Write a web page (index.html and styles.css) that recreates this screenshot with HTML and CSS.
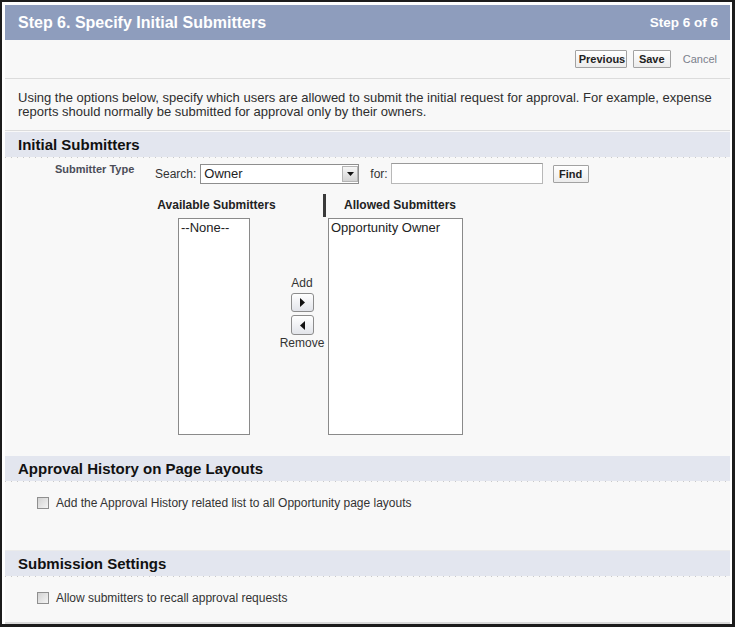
FILE: index.html
```html
<!DOCTYPE html>
<html>
<head>
<meta charset="utf-8">
<link rel="stylesheet" href="styles.css">
</head>
<body>
<div class="frame">
  <div class="panel">
    <div class="pbheader">
      <h1 class="title">Step 6. Specify Initial Submitters</h1>
      <span class="step">Step 6 of 6</span>
    </div>
    <div class="btnbar">
      <button class="btn btn-prev">Previous</button>
      <button class="btn btn-save">Save</button>
      <a class="cancel">Cancel</a>
    </div>
    <div class="desc">Using the options below, specify which users are allowed to submit the initial request for approval. For example, expense reports should normally be submitted for approval only by their owners.</div>

    <div class="sechead sec-initial">Initial Submitters</div>
    <div class="subrow">
      <div class="sublabel">Submitter Type</div>
      <div class="search">
        <span class="lbl">Search:</span>
        <div class="selectwrap">
          <span class="seltext">Owner</span>
          <span class="selarrow"><svg width="7" height="4" viewBox="0 0 7 4"><path d="M0 0H7L3.5 4Z" fill="#111"/></svg></span>
        </div>
        <span class="lbl lbl-for">for:</span>
        <input class="textin" type="text">
        <button class="btn btn-find">Find</button>
      </div>
    </div>
    <div class="duel">
      <div class="col col-avail">
        <div class="colhead">Available Submitters</div>
        <div class="listbox lb-avail"><div class="opt">--None--</div></div>
      </div>
      <div class="col col-mid">
        <div class="colhead colhead-mid"><span class="bar"></span></div>
        <div class="midbody">
          <div class="midtext">Add</div>
          <button class="arrowbtn"><svg width="5" height="9" viewBox="0 0 5 9"><path d="M0 0L5 4.5L0 9Z" fill="#111"/></svg></button>
          <button class="arrowbtn arrowbtn-left"><svg width="5" height="9" viewBox="0 0 5 9"><path d="M5 0L0 4.5L5 9Z" fill="#111"/></svg></button>
          <div class="midtext">Remove</div>
        </div>
      </div>
      <div class="col col-allow">
        <div class="colhead">Allowed Submitters</div>
        <div class="listbox lb-allow"><div class="opt">Opportunity Owner</div></div>
      </div>
    </div>

    <div class="sechead sec-approval">Approval History on Page Layouts</div>
    <div class="secbody sb-approval">
      <label class="chk"><input type="checkbox" class="cb"><span>Add the Approval History related list to all Opportunity page layouts</span></label>
    </div>

    <div class="sechead sec-submission">Submission Settings</div>
    <div class="secbody sb-submission">
      <label class="chk"><input type="checkbox" class="cb"><span>Allow submitters to recall approval requests</span></label>
    </div>
  </div>
</div>
</body>
</html>
```

FILE: styles.css
```css
* { box-sizing: border-box; }
html, body { margin: 0; padding: 0; background: #fff; }
body { font-family: "Liberation Sans", Arial, sans-serif; color: #333; }

.frame {
  width: 735px;
  height: 627px;
  border-style: solid;
  border-color: #1c1c1c;
  border-width: 2px 3px 3px 2px;
  padding: 3px 2px 0 3px;
  background: #fff;
}
.panel {
  height: 619px;
  background: #f8f8f8;
  border-bottom: 2px solid #d9d9d9;
  display: flex;
  flex-direction: column;
}

.pbheader {
  height: 35px;
  flex: none;
  background: #8e9dbd;
  display: flex;
  align-items: center;
  justify-content: space-between;
  padding: 0 12px 0 13px;
  color: #fff;
}
.title { margin: 0; font-size: 16px; font-weight: bold; }
.step { font-size: 13.5px; font-weight: bold; }

.btnbar {
  height: 39px;
  flex: none;
  border-bottom: 1px solid #dcdcdc;
  display: flex;
  align-items: center;
  justify-content: flex-end;
  padding-right: 13px;
}
.btn {
  font-family: "Liberation Sans", Arial, sans-serif;
  font-size: 11px;
  font-weight: bold;
  color: #222;
  height: 18px;
  padding: 0 3px;
  border: 1px solid #a2a2a2;
  border-radius: 1px;
  background: linear-gradient(#ffffff, #ececec);
  line-height: 16px;
}
.btn-prev { width: 52px; }
.btn-save { width: 38px; margin-left: 6px; }
.cancel { margin-left: 12px; font-size: 11px; color: #7b808c; }

.desc {
  height: 52px;
  flex: none;
  border-bottom: 1px solid #dcdcdc;
  padding: 12px 13px 0 13px;
  font-size: 13px;
  line-height: 14px;
  color: #2e2e2e;
}

.sechead {
  flex: none;
  height: 26px;
  padding-left: 13px;
  font-size: 15px;
  font-weight: bold;
  line-height: 25px;
  color: #111;
  background:
    linear-gradient(#e3e6ef, #e3e6ef) top left / 100% 25px no-repeat,
    repeating-linear-gradient(to right, #c9c9c9 0 1px, transparent 1px 6px) bottom left / 100% 1px no-repeat;
}
.sec-initial { margin-top: 1px; }
.sec-approval { margin-top: 21px; }
.sec-submission { border-top: 1px solid #ebebeb; height: 27px; }

.subrow {
  flex: none;
  display: flex;
  align-items: flex-start;
  padding: 5px 0 0 50px;
}
.sublabel {
  width: 100px;
  font-size: 11px;
  font-weight: bold;
  line-height: 13px;
  color: #4b4d58;
}
.search { display: flex; align-items: center; height: 21px; }
.lbl { font-size: 12px; color: #333; }
.selectwrap {
  position: relative;
  width: 159px;
  height: 20px;
  margin-left: 4px;
  border: 1px solid #8e8e8e;
  background: #fff;
  padding-left: 3px;
  font-size: 13px;
  line-height: 18px;
  color: #222;
}
.selarrow {
  position: absolute;
  right: 0;
  top: 1px;
  width: 16px;
  height: 16px;
  border: 1px solid #b4b4b4;
  background: linear-gradient(#f6f6f6, #d3d3d3);
  display: flex;
  align-items: center;
  justify-content: center;
}
.lbl-for { margin-left: 11px; }
.textin {
  width: 152px;
  height: 21px;
  margin: 0 0 0 3px;
  border: 1px solid #b8b8b8;
  border-top-color: #9a9a9a;
  background: #fff;
  padding: 0;
}
.btn-find { width: 36px; margin-left: 10px; }

.duel {
  flex: none;
  display: flex;
  margin: 10px 0 0 152px;
}
.col { display: flex; flex-direction: column; }
.col-avail { width: 119px; }
.col-mid { width: 52px; }
.col-allow { width: 144px; }
.colhead {
  height: 23px;
  font-size: 12px;
  font-weight: bold;
  color: #222;
  text-align: center;
  line-height: 23px;
  white-space: nowrap;
}
.colhead-mid { display: flex; justify-content: flex-end; padding-right: 2px; }
.bar { width: 3px; height: 23px; background: #3a3a3a; }
.listbox {
  margin-top: 1px;
  height: 217px;
  border: 1px solid #8a8a8a;
  background: #fff;
}
.lb-avail { width: 72px; margin-left: 21px; }
.lb-allow { width: 135px; }
.opt { font-size: 13px; line-height: 15px; padding: 1px 2px; color: #222; }

.midbody {
  display: flex;
  flex-direction: column;
  align-items: center;
  padding-top: 59px;
}
.midtext { font-size: 12px; line-height: 14px; color: #333; }
.arrowbtn {
  width: 23px;
  height: 19px;
  margin-top: 3px;
  padding: 0;
  border: 1px solid #8c8c8c;
  border-radius: 3px;
  background: linear-gradient(#ffffff, #e2e4ea);
  display: flex;
  align-items: center;
  justify-content: center;
}
.arrowbtn-left { height: 20px; margin-bottom: 1px; }

.secbody { flex: none; padding: 14px 0 0 32px; }
.sb-approval { height: 68px; }
.sb-submission { flex: 1; }
.chk { display: flex; align-items: center; font-size: 12px; color: #333; }
.cb {
  appearance: none;
  -webkit-appearance: none;
  width: 12px;
  height: 12px;
  margin: 0 7px 0 0;
  border: 1px solid #8f8f8f;
  background: linear-gradient(135deg, #d2d2d2, #f4f4f4);
}
```
